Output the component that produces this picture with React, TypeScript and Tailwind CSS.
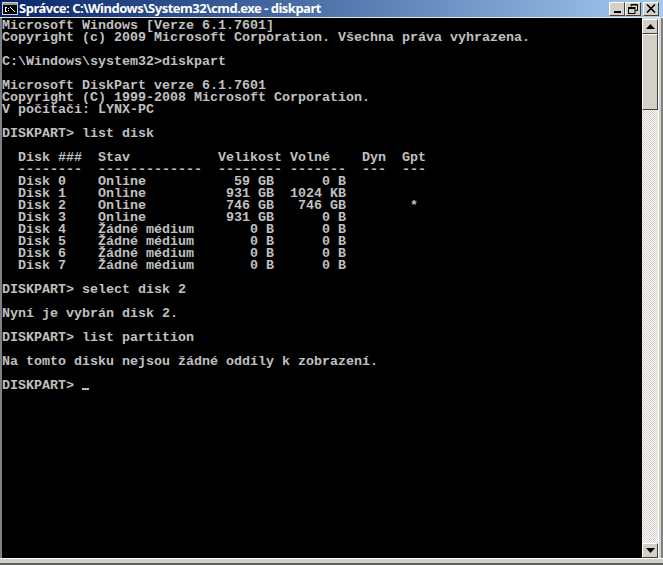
const lines = [
  'Microsoft Windows [Verze 6.1.7601]',
  'Copyright (c) 2009 Microsoft Corporation. Všechna práva vyhrazena.',
  '',
  'C:\\Windows\\system32>diskpart',
  '',
  'Microsoft DiskPart verze 6.1.7601',
  'Copyright (C) 1999-2008 Microsoft Corporation.',
  'V počítači: LYNX-PC',
  '',
  'DISKPART> list disk',
  '',
  '  Disk ###  Stav           Velikost Volné    Dyn  Gpt',
  '  --------  -------------  -------- -------  ---  ---',
  '  Disk 0    Online           59 GB      0 B',
  '  Disk 1    Online          931 GB  1024 KB',
  '  Disk 2    Online          746 GB   746 GB        *',
  '  Disk 3    Online          931 GB      0 B',
  '  Disk 4    Žádné médium       0 B      0 B',
  '  Disk 5    Žádné médium       0 B      0 B',
  '  Disk 6    Žádné médium       0 B      0 B',
  '  Disk 7    Žádné médium       0 B      0 B',
  '',
  'DISKPART> select disk 2',
  '',
  'Nyní je vybrán disk 2.',
  '',
  'DISKPART> list partition',
  '',
  'Na tomto disku nejsou žádné oddíly k zobrazení.',
  '',
]

function CaptionButton({ children, className }: { children: React.ReactNode; className?: string }) {
  return (
    <div className={`flex h-[14px] w-[16px] items-center justify-center border border-t-white border-l-white border-r-[#404040] border-b-[#404040] bg-[#d4d0c8] ${className ?? ''}`}>
      {children}
    </div>
  )
}

function ScrollButton({ up }: { up?: boolean }) {
  return (
    <div className="flex h-[15px] w-[16px] shrink-0 items-center justify-center border border-t-white border-l-white border-r-[#404040] border-b-[#404040] bg-[#d4d0c8]">
      <svg width="9" height="5" viewBox="0 0 9 5">
        <path d={up ? 'M4.5 0 L9 5 L0 5 Z' : 'M0 0 L9 0 L4.5 5 Z'} fill="#000" />
      </svg>
    </div>
  )
}

export default function App() {
  return (
    <div className="flex h-[565px] w-[663px] flex-col overflow-hidden bg-[#d4d0c8]">
      {/* title bar */}
      <div className="flex h-[17px] shrink-0 items-center justify-between bg-gradient-to-r from-[#0a246a] to-[#a6caf0] pl-[2px] pr-[4px]">
        <div className="flex items-center gap-[1px]">
          <svg width="16" height="13" viewBox="0 0 16 13">
            <rect x="0.5" y="0.5" width="15" height="12" fill="#000" stroke="#d0d0d0" />
            <rect x="1" y="1" width="14" height="2" fill="#9a9a9a" />
            <path d="M3 5h2v1H3zM3 9h2v1H3zM3 6h1v3H3zM6 6h1v1H6zM6 8h1v1H6zM8 5h1v1H8zM9 6h1v1H9zM10 7h1v1h-1zM11 8h1v1h-1zM12 9h1v1h-1z" fill="#fff" />
          </svg>
          <span className="font-['Noto_Sans',sans-serif] text-[13px] leading-[17px] font-bold tracking-[-0.5px] whitespace-pre text-white">
            Správce: C:\Windows\System32\cmd.exe - diskpart
          </span>
        </div>
        <div className="flex items-center">
          <CaptionButton>
            <div className="mt-[7px] h-[2px] w-[7px] bg-black" />
          </CaptionButton>
          <CaptionButton>
            <svg width="10" height="10" viewBox="0 0 10 10" fill="none" stroke="#000">
              <path d="M3 2.5V0.5H9.5V6.5H7.5" />
              <path d="M3 1H9.5" />
              <rect x="0.5" y="3.5" width="6.5" height="6" />
              <path d="M0.5 4.5H7" />
            </svg>
          </CaptionButton>
          <CaptionButton className="ml-[2px]">
            <svg width="10" height="9" viewBox="0 0 10 9" fill="none" stroke="#000" strokeWidth="1.6">
              <path d="M1 0.5L9 8.5M9 0.5L1 8.5" />
            </svg>
          </CaptionButton>
        </div>
      </div>

      <div className="h-px shrink-0 bg-[#e8e6e0]" />

      <div className="flex min-h-0 flex-1">
        <div className="w-[2px] shrink-0 bg-[#808080]" />

        {/* console */}
        <div className="flex-1 overflow-hidden bg-black pt-[2px]">
          <pre className="font-['Liberation_Mono',monospace] text-[13.33px] leading-[12px] font-bold text-[#c0c0c0]">
            {lines.join('\n') + '\n'}
            DISKPART&gt; <span className="inline-block h-[2px] w-[7px] translate-y-[1px] bg-[#c0c0c0] align-baseline" />
          </pre>
        </div>

        {/* scrollbar */}
        <div className="flex w-[16px] shrink-0 flex-col">
          <div className="h-px shrink-0" />
          <ScrollButton up />
          <div className="flex-1 bg-[#d4d0c8] bg-[repeating-conic-gradient(#ffffff_0_25%,#d4d0c8_0_50%)] bg-[length:2px_2px]">
            <div className="h-[76px] w-[16px] border border-t-white border-l-white border-r-[#404040] border-b-[#404040] bg-[#d4d0c8]" />
          </div>
          <ScrollButton />
        </div>

        <div className="w-[5px] shrink-0 border-r-2 border-l border-r-[#808080] border-l-white bg-[#d4d0c8]" />
      </div>

      {/* bottom frame */}
      <div className="h-[7px] shrink-0 border-t border-b-2 border-t-white border-b-[#606060] bg-[#d4d0c8]" />
    </div>
  )
}
